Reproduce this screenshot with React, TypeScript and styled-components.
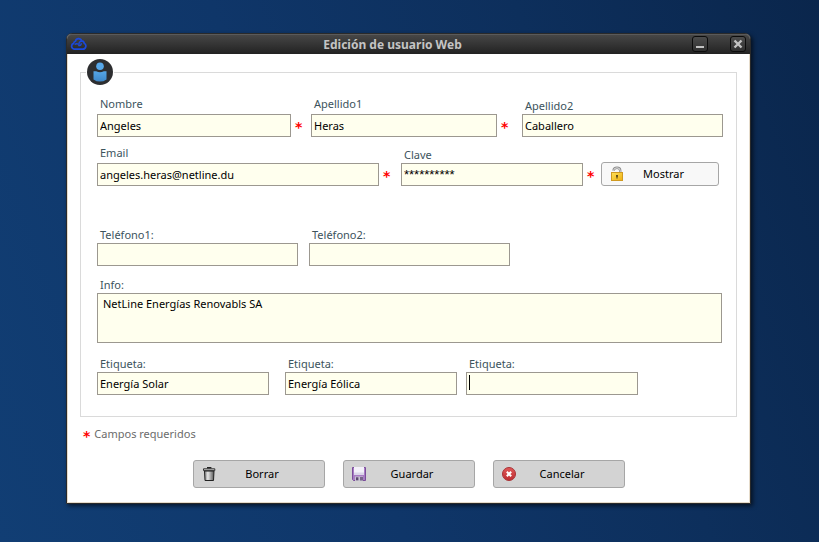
import React, { useState } from "react";
import styled, { createGlobalStyle } from "styled-components";

const GlobalStyle = createGlobalStyle`
  *, *::before, *::after { box-sizing: border-box; }
  body {
    margin: 0;
    font-family: "Noto Sans", "Open Sans", sans-serif;
    font-size: 11px;
    line-height: 16px;
    color: #000;
  }
  button, input, textarea { font: inherit; color: inherit; }
`;

const Desktop = styled.main`
  min-height: 100vh;
  padding: 33px 68px 37px 66px;
  background: linear-gradient(70deg, #113e74 0%, #0f3669 40%, #0d2f5c 70%, #0a264c 100%);
`;

const Dialog = styled.section`
  border: 1px solid #2a2a2a;
  border-radius: 6px 6px 0 0;
  background: #fff;
  box-shadow: 2px 2px 4px rgba(0, 0, 0, 0.6);
`;

const TitleBar = styled.header`
  display: flex;
  align-items: center;
  height: 20px;
  padding: 0 4px 0 3px;
  border-radius: 5px 5px 0 0;
  background: linear-gradient(#484848, #222);
  box-shadow: inset 0 1px #5a5a5a;
`;

const Title = styled.h1`
  flex: 1;
  margin: 0;
  padding: 1px 0 0 6px;
  font-size: 12px;
  font-weight: 700;
  text-align: center;
  color: #c4c4c4;
`;

const WindowButtons = styled.div`
  display: flex;
  gap: 22px;
`;

const WindowButton = styled.button`
  display: grid;
  place-items: center;
  width: 16px;
  height: 16px;
  padding: 0;
  border: 1px solid #0c0c0c;
  border-radius: 3px;
  background: linear-gradient(#4c4c4c, #303030);
`;

const Body = styled.form`
  padding: 5px 13px 14px;
  border: solid #e6dccb;
  border-width: 0 1px 1px;
`;

const Group = styled.fieldset`
  min-width: 0;
  margin: 0 -1px;
  padding: 11px 13px 21px 16px;
  border: 1px solid #dadada;
`;

const Legend = styled.legend`
  margin-left: -11px;
  padding: 0 1px;
`;

const Row = styled.div<{ $columns: string; $gap?: number }>`
  display: grid;
  grid-template-columns: ${(p) => p.$columns};
  align-items: end;
  margin-top: ${(p) => p.$gap ?? 0}px;
`;

const Field = styled.div<{ $loose?: boolean }>`
  display: flex;
  flex-direction: column;
  gap: ${(p) => (p.$loose ? 2 : 0)}px;
  min-width: 0;
`;

const Label = styled.label`
  padding-left: 3px;
  color: #3c535c;
`;

const TextInput = styled.input`
  width: 100%;
  height: 23px;
  padding: 0 2px;
  border: 1px solid #9c9890;
  border-radius: 0;
  outline: none;
  background-color: #ffffee;
`;

const PasswordInput = styled(TextInput)<{ $masked: boolean }>`
  ${(p) => p.$masked && `font-family: "Liberation Sans", sans-serif; font-size: 13px;`}
`;

const TagInput = styled(TextInput)`
  &:focus:placeholder-shown {
    caret-color: transparent;
    background-image: linear-gradient(#000, #000);
    background-size: 1px 15px;
    background-position: 2px 2px;
    background-repeat: no-repeat;
  }
`;

const InfoArea = styled.textarea`
  display: block;
  width: 100%;
  height: 50px;
  padding: 2px 5px;
  border: 1px solid #9c9890;
  border-radius: 0;
  outline: none;
  resize: none;
  background: #ffffee;
`;

const Required = styled.span`
  padding: 2px 0 0 4px;
  height: 23px;
  font-family: "DejaVu Sans", sans-serif;
  font-size: 14px;
  font-weight: 700;
  line-height: 23px;
  color: #f00;
`;

const Note = styled.p`
  display: flex;
  align-items: center;
  gap: 4px;
  margin: 9px 0 18px 2px;
  height: 16px;
  color: #6b6b6b;
`;

const NoteMark = styled(Required)`
  padding-left: 0;
`;

const Actions = styled.div`
  display: flex;
  justify-content: center;
  gap: 18px;
`;

const IconButton = styled.button<{ $light?: boolean }>`
  display: flex;
  align-items: center;
  width: ${(p) => (p.$light ? "100%" : "132px")};
  height: ${(p) => (p.$light ? 24 : 28)}px;
  padding: 0 16px 0 7px;
  border: 1px solid #a6a6a6;
  border-radius: 3px;
  background: ${(p) => (p.$light ? "#f8f8f8" : "#d3d3d3")};
`;

const ButtonText = styled.span`
  flex: 1;
  text-align: center;
`;

const CloudIcon = () => (
  <svg width="17" height="14" viewBox="0 0 17 14" fill="none" stroke="#1a49dc" strokeWidth="1.7" strokeLinecap="round" aria-hidden="true">
    <path d="M4.2 12.2H12.8A3.2 3.2 0 0 0 14.2 6.2A2.8 2.8 0 0 0 11.6 3.9A3.2 3.2 0 0 0 5.4 4.3A2.6 2.6 0 0 0 3.6 6.4A3 3 0 0 0 4.2 12.2Z" />
    <path d="M11.4 4.2Q8.6 4.6 8.8 8.6M8.8 8.6Q11 8.6 11.2 6.8M5.2 7.2Q6.2 6.4 7.4 7" strokeWidth="1.4" />
  </svg>
);

const UserIcon = () => (
  <svg width="26" height="26" viewBox="0 0 26 26" role="img" aria-label="Usuario" display="block">
    <defs>
      <linearGradient id="userBlue" x1="0" y1="0" x2="0" y2="1">
        <stop offset="0" stopColor="#56a6e6" />
        <stop offset="1" stopColor="#3d87c8" />
      </linearGradient>
    </defs>
    <circle cx="13" cy="13" r="13" fill="#2d2e30" />
    <circle cx="13" cy="7.3" r="3.8" fill="#57a7e8" />
    <path d="M6.5 12.2H9.2Q13 14.2 16.8 12.2H19.5V20.4Q16.5 22.6 13 22.6T6.5 20.4Z" fill="url(#userBlue)" />
  </svg>
);

const LockIcon = () => (
  <svg width="16" height="16" viewBox="0 0 16 16" aria-hidden="true">
    <defs>
      <linearGradient id="lockGold" x1="0" y1="0" x2="1" y2="1">
        <stop offset="0" stopColor="#ffe25a" />
        <stop offset="1" stopColor="#eeb012" />
      </linearGradient>
    </defs>
    <path d="M4.5 4.6Q4.8 1.8 8 1.8T11.2 4.6V7" fill="none" stroke="#8a8a8a" strokeWidth="2.4" />
    <path d="M4.5 4.6Q4.8 1.8 8 1.8T11.2 4.6V7" fill="none" stroke="#ddd" strokeWidth="1" />
    <rect x="2.5" y="6.5" width="11" height="8" fill="url(#lockGold)" stroke="#d09a20" />
    <path d="M7 9H9V10.5L8.6 11V12.5H7.4V11L7 10.5Z" fill="#5c4a17" />
  </svg>
);

const TrashIcon = () => (
  <svg width="16" height="16" viewBox="0 0 16 16" aria-hidden="true">
    <defs>
      <linearGradient id="binMetal">
        <stop offset="0" stopColor="#777" />
        <stop offset="0.35" stopColor="#e6e6e6" />
        <stop offset="0.7" stopColor="#999" />
        <stop offset="1" stopColor="#555" />
      </linearGradient>
    </defs>
    <path d="M3.5 5H13L12.5 14.5H4Z" fill="url(#binMetal)" stroke="#222" />
    <path d="M2.5 2.8H13.8V4.6H2.5Z" fill="#c8c8c8" stroke="#333" />
    <path d="M6 1.7H10.4" stroke="#222" strokeWidth="1.4" />
  </svg>
);

const SaveIcon = () => (
  <svg width="16" height="16" viewBox="0 0 16 16" aria-hidden="true">
    <path d="M1.5 1.5H14.5V14.5H2.5L1.5 13.5Z" fill="#a87cc4" stroke="#7b4d9b" />
    <rect x="3" y="1" width="10" height="8" fill="#f4f1fa" />
    <path d="M3 6.5H13V9H3Z" fill="#dcd6ea" />
    <rect x="4" y="10.5" width="8" height="4.5" fill="#c9c4d2" />
    <rect x="5" y="11.3" width="2.4" height="3" fill="#5b4770" />
    <rect x="9" y="11" width="3" height="3.5" fill="#77658a" />
  </svg>
);

const CancelIcon = () => (
  <svg width="16" height="16" viewBox="0 0 16 16" aria-hidden="true">
    <defs>
      <linearGradient id="cancelRed" x1="0" y1="0" x2="0" y2="1">
        <stop offset="0" stopColor="#e05a5a" />
        <stop offset="1" stopColor="#bd2c30" />
      </linearGradient>
    </defs>
    <circle cx="8" cy="8" r="6.5" fill="url(#cancelRed)" stroke="#a93236" />
    <path d="M5.8 5.8L10.2 10.2M10.2 5.8L5.8 10.2" stroke="#fff" strokeWidth="2" />
  </svg>
);

export default function App() {
  const [visible, setVisible] = useState(false);
  const [password, setPassword] = useState("netline123");

  return (
    <>
      <GlobalStyle />
      <Desktop>
        <Dialog role="dialog" aria-labelledby="title">
          <TitleBar>
            <CloudIcon />
            <Title id="title">Edición de usuario Web</Title>
            <WindowButtons>
              <WindowButton type="button" aria-label="Minimizar">
                <svg width="10" height="10" viewBox="0 0 10 10" aria-hidden="true">
                  <path d="M1 8H9" stroke="#c2c2c2" strokeWidth="2" />
                </svg>
              </WindowButton>
              <WindowButton type="button" aria-label="Cerrar">
                <svg width="10" height="10" viewBox="0 0 10 10" aria-hidden="true">
                  <path d="M1.5 1.5L8.5 8.5M8.5 1.5L1.5 8.5" stroke="#c2c2c2" strokeWidth="2.4" />
                </svg>
              </WindowButton>
            </WindowButtons>
          </TitleBar>
          <Body onSubmit={(e) => e.preventDefault()}>
            <Group>
              <Legend><UserIcon /></Legend>
              <Row $columns="194fr 20px 186fr 25px 201fr">
                <Field $loose>
                  <Label htmlFor="nombre">Nombre</Label>
                  <TextInput id="nombre" defaultValue="Angeles" />
                </Field>
                <Required>*</Required>
                <Field $loose>
                  <Label htmlFor="apellido1">Apellido1</Label>
                  <TextInput id="apellido1" defaultValue="Heras" />
                </Field>
                <Required>*</Required>
                <Field>
                  <Label htmlFor="apellido2">Apellido2</Label>
                  <TextInput id="apellido2" defaultValue="Caballero" />
                </Field>
              </Row>
              <Row $columns="282fr 22px 182fr 18px 118fr 4px" $gap={8}>
                <Field $loose>
                  <Label htmlFor="email">Email</Label>
                  <TextInput id="email" defaultValue="angeles.heras@netline.du" />
                </Field>
                <Required>*</Required>
                <Field>
                  <Label htmlFor="clave">Clave</Label>
                  <PasswordInput
                    id="clave"
                    $masked={!visible}
                    readOnly={!visible}
                    value={visible ? password : "*".repeat(password.length)}
                    onChange={(e) => setPassword(e.target.value)}
                  />
                </Field>
                <Required>*</Required>
                <IconButton type="button" $light onClick={() => setVisible(!visible)}>
                  <LockIcon />
                  <ButtonText>Mostrar</ButtonText>
                </IconButton>
              </Row>
              <Row $columns="201fr 11px 201fr 213fr" $gap={41}>
                <Field>
                  <Label htmlFor="tel1">Teléfono1:</Label>
                  <TextInput id="tel1" type="tel" />
                </Field>
                <span />
                <Field>
                  <Label htmlFor="tel2">Teléfono2:</Label>
                  <TextInput id="tel2" type="tel" />
                </Field>
              </Row>
              <Row $columns="1fr 1px" $gap={11}>
                <Field>
                  <Label htmlFor="info">Info:</Label>
                  <InfoArea id="info" defaultValue="NetLine Energías Renovabls SA" />
                </Field>
              </Row>
              <Row $columns="172fr 16px 172fr 9px 172fr 85fr" $gap={13}>
                <Field>
                  <Label htmlFor="tag1">Etiqueta:</Label>
                  <TagInput id="tag1" defaultValue="Energía Solar" />
                </Field>
                <span />
                <Field>
                  <Label htmlFor="tag2">Etiqueta:</Label>
                  <TagInput id="tag2" defaultValue="Energía Eólica" />
                </Field>
                <span />
                <Field>
                  <Label htmlFor="tag3">Etiqueta:</Label>
                  <TagInput id="tag3" placeholder=" " autoFocus />
                </Field>
              </Row>
            </Group>
            <Note>
              <NoteMark>*</NoteMark>
              Campos requeridos
            </Note>
            <Actions>
              <IconButton type="button">
                <TrashIcon />
                <ButtonText>Borrar</ButtonText>
              </IconButton>
              <IconButton type="submit">
                <SaveIcon />
                <ButtonText>Guardar</ButtonText>
              </IconButton>
              <IconButton type="button">
                <CancelIcon />
                <ButtonText>Cancelar</ButtonText>
              </IconButton>
            </Actions>
          </Body>
        </Dialog>
      </Desktop>
    </>
  );
}
